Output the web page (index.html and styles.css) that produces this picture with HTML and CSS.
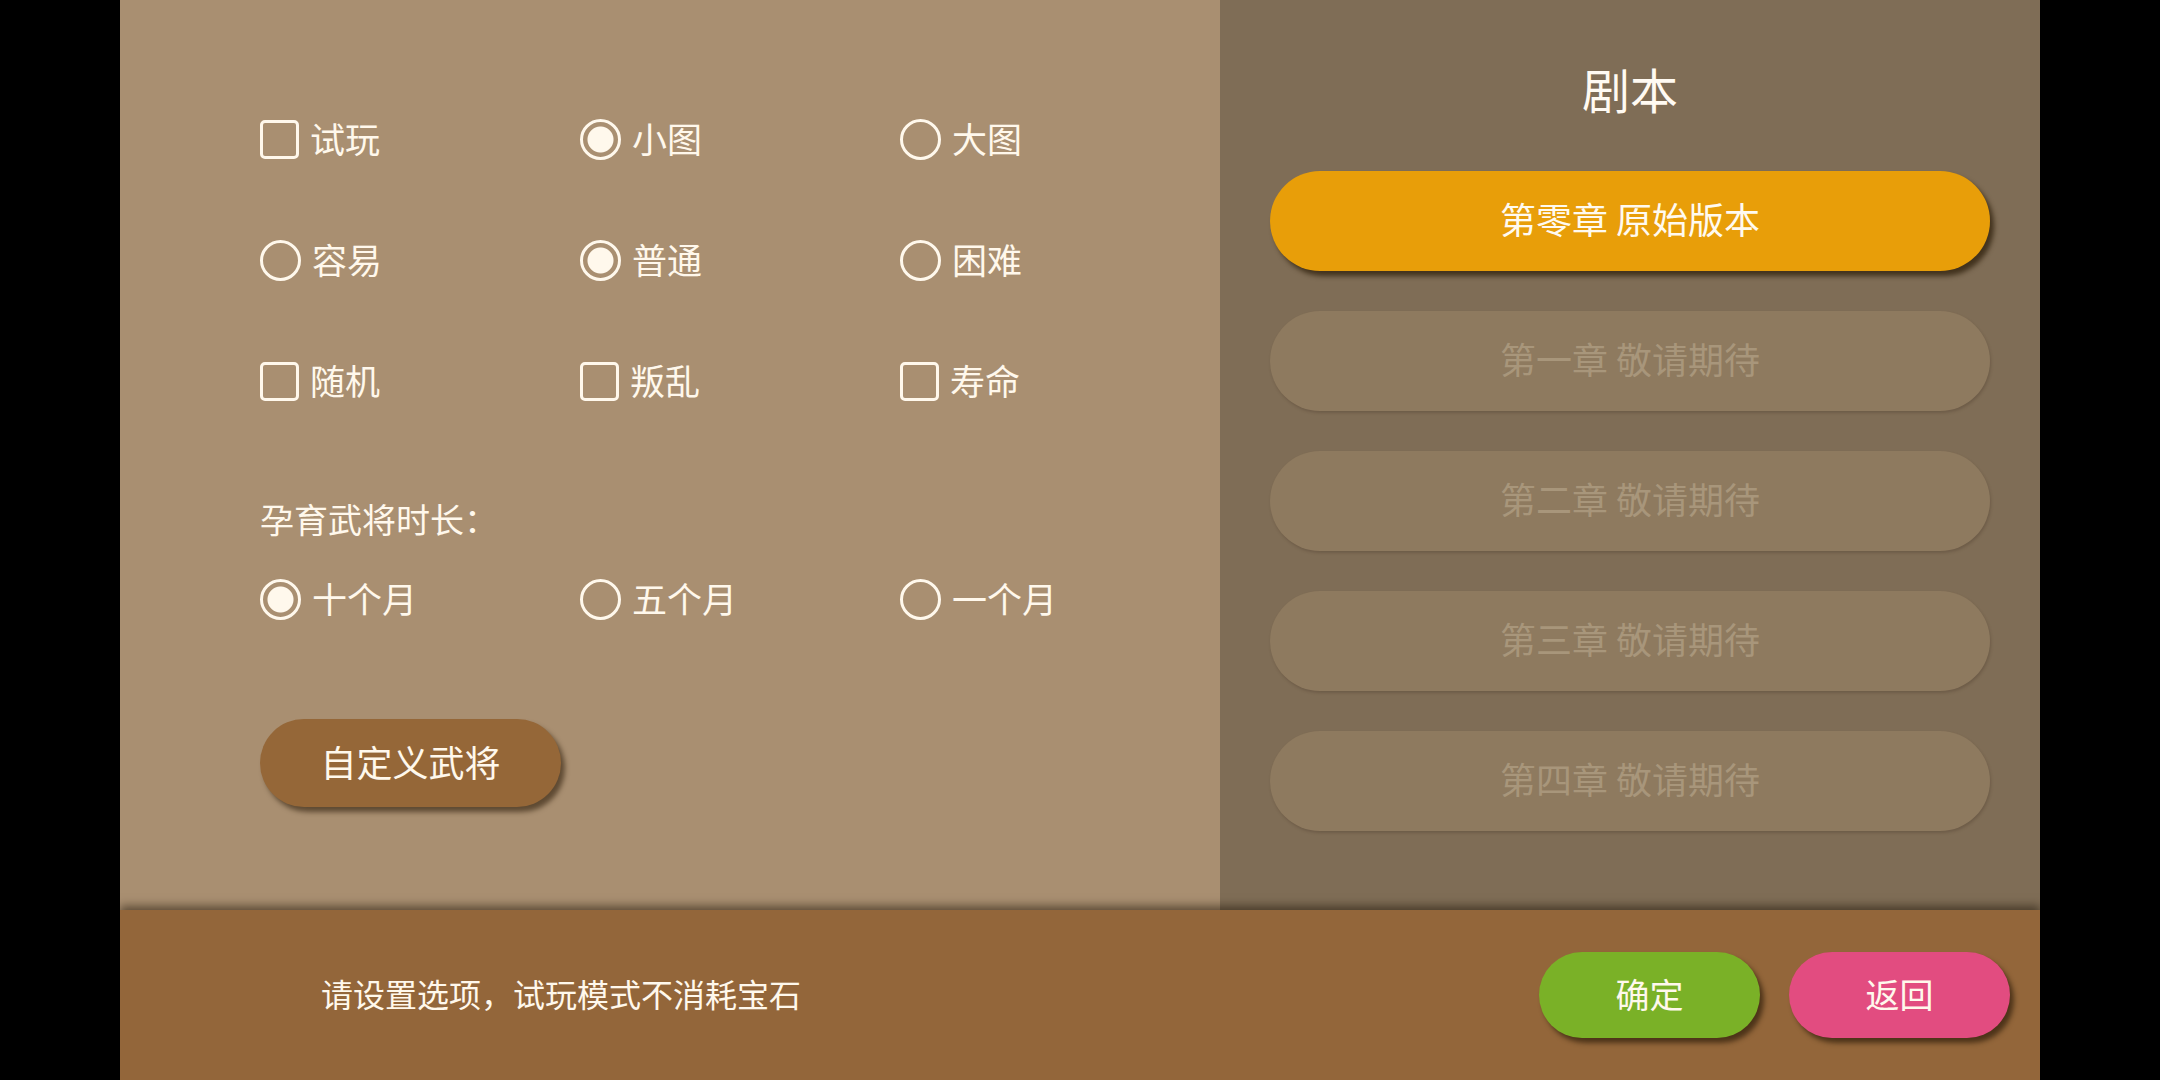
FILE: index.html
```html
<!DOCTYPE html>
<html lang="zh">
<head>
<meta charset="utf-8">
<title>设置</title>
<link rel="stylesheet" href="styles.css">
</head>
<body>
<div class="app">
  <div class="top">
    <section class="left">
      <div class="grid">
        <div class="opt"><span class="box"></span><span>试玩</span></div>
        <div class="opt"><span class="radio on"></span><span>小图</span></div>
        <div class="opt"><span class="radio"></span><span>大图</span></div>
        <div class="opt"><span class="radio"></span><span>容易</span></div>
        <div class="opt"><span class="radio on"></span><span>普通</span></div>
        <div class="opt"><span class="radio"></span><span>困难</span></div>
        <div class="opt"><span class="box"></span><span>随机</span></div>
        <div class="opt"><span class="box"></span><span>叛乱</span></div>
        <div class="opt"><span class="box"></span><span>寿命</span></div>
      </div>
      <div class="label">孕育武将时长：</div>
      <div class="grid one">
        <div class="opt"><span class="radio on"></span><span>十个月</span></div>
        <div class="opt"><span class="radio"></span><span>五个月</span></div>
        <div class="opt"><span class="radio"></span><span>一个月</span></div>
      </div>
      <div class="custom">自定义武将</div>
    </section>
    <section class="right">
      <div class="title">剧本</div>
      <div class="chapters">
        <div class="chap active">第零章 原始版本</div>
        <div class="chap">第一章 敬请期待</div>
        <div class="chap">第二章 敬请期待</div>
        <div class="chap">第三章 敬请期待</div>
        <div class="chap">第四章 敬请期待</div>
      </div>
    </section>
  </div>
  <footer class="bottom">
    <div class="hint">请设置选项，试玩模式不消耗宝石</div>
    <div class="actions">
      <div class="btn ok">确定</div>
      <div class="btn back">返回</div>
    </div>
  </footer>
</div>
</body>
</html>
```

FILE: styles.css
```css
html, body {
  margin: 0;
  padding: 0;
  background: #000;
}
body {
  font-family: "Noto Sans CJK SC", "Noto Sans", sans-serif;
  color: #fff8ec;
}
.app {
  width: 1920px;
  height: 1080px;
  margin: 0 auto;
  display: flex;
  flex-direction: column;
  overflow: hidden;
}
.top {
  display: flex;
  height: 910px;
  flex: none;
}
.left {
  width: 1100px;
  background: #a98f71;
  padding: 119px 0 0 140px;
  box-sizing: border-box;
}
.grid {
  display: grid;
  grid-template-columns: repeat(3, 320px);
  row-gap: 81px;
}
.opt {
  display: flex;
  align-items: center;
  gap: 11px;
  height: 40px;
  font-size: 35px;
  line-height: 40px;
}
.opt span:last-child {
  padding-bottom: 2px;
}
.box {
  width: 39px;
  height: 39px;
  box-sizing: border-box;
  border: 3px solid #fff8ec;
  border-radius: 5px;
  flex: none;
}
.radio {
  width: 41px;
  height: 41px;
  box-sizing: border-box;
  border: 3.5px solid #fff8ec;
  border-radius: 50%;
  flex: none;
}
.radio.on {
  background: radial-gradient(circle, #fff8ec 0, #fff8ec 12.5px, transparent 13.5px);
}
.label {
  margin-top: 94px;
  font-size: 34px;
  line-height: 48px;
}
.grid.one {
  margin-top: 36px;
}
.custom {
  margin-top: 100px;
  width: 301px;
  height: 88px;
  border-radius: 44px;
  background: #956738;
  font-size: 36px;
  display: flex;
  align-items: center;
  justify-content: center;
  padding-bottom: 4px;
  box-sizing: border-box;
  box-shadow: 4px 5px 5px rgba(45, 28, 10, 0.6);
}
.right {
  width: 820px;
  background: #7f6d56;
  padding: 57px 50px 0;
  box-sizing: border-box;
}
.title {
  text-align: center;
  font-size: 48px;
  line-height: 62px;
  color: #fffaf2;
}
.chapters {
  margin-top: 52px;
  display: flex;
  flex-direction: column;
  gap: 40px;
}
.chap {
  height: 100px;
  border-radius: 50px;
  background: #8e7a5f;
  color: #a8967b;
  font-size: 36px;
  display: flex;
  align-items: center;
  justify-content: center;
  padding-bottom: 6px;
  box-sizing: border-box;
  box-shadow: 1px 2px 3px rgba(60, 45, 30, 0.25);
}
.chap.active {
  background: #e89e09;
  color: #fffaf0;
  box-shadow: 4px 5px 5px rgba(40, 25, 5, 0.7);
}
.bottom {
  position: relative;
  height: 170px;
  flex: none;
  background: #93663a;
  display: flex;
  align-items: center;
  justify-content: space-between;
  padding: 0 30px 0 201px;
  box-sizing: border-box;
  box-shadow: 0 -4px 9px rgba(30, 20, 8, 0.55);
}
.hint {
  font-size: 32px;
  line-height: 40px;
  padding-bottom: 4px;
}
.actions {
  display: flex;
  gap: 29px;
}
.btn {
  width: 221px;
  height: 86px;
  border-radius: 43px;
  font-size: 34px;
  display: flex;
  align-items: center;
  justify-content: center;
  padding-bottom: 4px;
  box-sizing: border-box;
  box-shadow: 4px 5px 5px rgba(40, 25, 8, 0.65);
}
.ok {
  background: #7ab127;
}
.back {
  background: #e24c80;
}
```
